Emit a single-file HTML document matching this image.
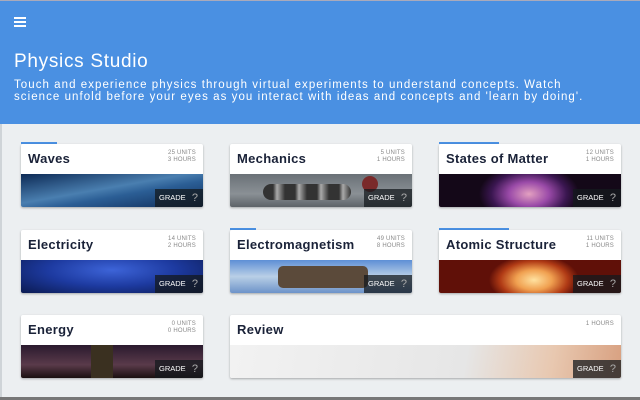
<!DOCTYPE html>
<html><head><meta charset="utf-8"><style>
*{margin:0;padding:0;box-sizing:border-box}
body{width:640px;height:400px;overflow:hidden;background:#eceff1;font-family:"Liberation Sans",sans-serif;position:relative}
.top{position:absolute;left:0;top:0;width:640px;height:1px;background:#aab}
.hdr{position:absolute;left:0;top:1px;width:640px;height:123px;background:#4a90e2;color:#fff}
.menu{position:absolute;left:14px;top:16px;width:12px}
.menu i{display:block;height:1.5px;background:#fff;margin-bottom:2.5px}
h1{position:absolute;left:14px;top:50px;font-size:19px;font-weight:normal;letter-spacing:.7px}
.desc{position:absolute;left:14px;top:78px;font-size:11.5px;line-height:12px;width:620px;letter-spacing:1.05px;white-space:nowrap}
.card{position:absolute;width:182px;height:63px;background:#fff;border-radius:2px;box-shadow:0 1px 2px rgba(0,0,0,.3);overflow:hidden}
.card .t{position:absolute;left:7px;top:7px;font-size:13px;font-weight:bold;color:#1a2238;letter-spacing:.3px}
.card .m{position:absolute;right:7px;top:6px;font-size:6px;color:#888;text-align:right;line-height:7px;letter-spacing:.2px}
.card .img{position:absolute;left:0;top:30px;right:0;bottom:0}
.card .g{position:absolute;right:0;bottom:0;width:48px;height:18px;background:rgba(20,25,30,.75);color:#fff;font-size:7.5px;line-height:18px;padding-left:4px}
.card .g b{position:absolute;right:5px;top:0;font-size:11px;color:#aaa;font-weight:normal}
.bar{position:absolute;height:2px;background:#4a90e2}
.bot{position:absolute;left:0;top:397px;width:640px;height:3px;background:#777}
.left{position:absolute;left:0;top:124px;width:2px;height:276px;background:#cfd4d8}
</style></head><body>
<div class="top"></div>
<div class="hdr">
<div class="menu"><i></i><i></i><i></i></div>
<h1>Physics Studio</h1>
<div class="desc">Touch and experience physics through virtual experiments to understand concepts. Watch<br>science unfold before your eyes as you interact with ideas and concepts and 'learn by doing'.</div>
</div>
<div class="left"></div>

<div class="bar" style="left:21px;top:142px;width:36px"></div>
<div class="card" style="left:21px;top:144px"><div class="t">Waves</div><div class="m">25 UNITS<br>3 HOURS</div>
<div class="img" style="background:linear-gradient(170deg,#0d2a55 0%,#4a7fb0 45%,#2b5e95 60%,#0f2c58 100%)"></div><div class="g">GRADE<b>?</b></div></div>

<div class="card" style="left:230px;top:144px"><div class="t">Mechanics</div><div class="m">5 UNITS<br>1 HOURS</div>
<div class="img" style="background:linear-gradient(180deg,#6a7177,#8a9095 60%,#5d6368)"><div style="position:absolute;left:33px;top:10px;width:88px;height:16px;border-radius:8px;background:repeating-linear-gradient(90deg,#333 0 10px,#aaa 14px,#333 22px)"></div><div style="position:absolute;left:132px;top:2px;width:16px;height:16px;border-radius:50%;background:#7a2a2a"></div></div><div class="g">GRADE<b>?</b></div></div>

<div class="bar" style="left:439px;top:142px;width:60px"></div>
<div class="card" style="left:439px;top:144px"><div class="t">States of Matter</div><div class="m">12 UNITS<br>1 HOURS</div>
<div class="img" style="background:radial-gradient(ellipse 50px 30px at 90px 20px,#e3a0c0,#9a4aa8 40%,#3a1650 75%,#140818)"></div><div class="g">GRADE<b>?</b></div></div>

<div class="card" style="left:21px;top:230px"><div class="t">Electricity</div><div class="m">14 UNITS<br>2 HOURS</div>
<div class="img" style="background:radial-gradient(ellipse at 50% 30%,#3d64d8,#1d3aa0 50%,#0b1a50)"></div><div class="g">GRADE<b>?</b></div></div>

<div class="bar" style="left:230px;top:228px;width:26px"></div>
<div class="card" style="left:230px;top:230px"><div class="t">Electromagnetism</div><div class="m">49 UNITS<br>8 HOURS</div>
<div class="img" style="background:linear-gradient(180deg,#5d8fd5,#b9cfe6 50%,#6d93c9)"><div style="position:absolute;left:48px;top:6px;width:90px;height:22px;border-radius:5px;background:#5b4a3a"></div></div><div class="g">GRADE<b>?</b></div></div>

<div class="bar" style="left:439px;top:228px;width:70px"></div>
<div class="card" style="left:439px;top:230px"><div class="t">Atomic Structure</div><div class="m">11 UNITS<br>1 HOURS</div>
<div class="img" style="background:radial-gradient(ellipse 45px 25px at 95px 20px,#ffe2a0,#f0a050 40%,#b03a15 75%,#601008)"></div><div class="g">GRADE<b>?</b></div></div>

<div class="card" style="left:21px;top:315px"><div class="t">Energy</div><div class="m">0 UNITS<br>0 HOURS</div>
<div class="img" style="background:linear-gradient(180deg,#2a1a2e,#5a3a4a 60%,#1a1010)"><div style="position:absolute;left:70px;top:0;width:22px;height:33px;background:#3a3020"></div></div><div class="g">GRADE<b>?</b></div></div>

<div class="card" style="left:230px;top:315px;width:391px"><div class="t">Review</div><div class="m">1 HOURS</div>
<div class="img" style="background:linear-gradient(100deg,#f2f2f2 0%,#e6e6e6 60%,#e8c8b0 82%,#d8a080 100%)"></div><div class="g">GRADE<b>?</b></div></div>
<div class="bot"></div>
</body></html>
